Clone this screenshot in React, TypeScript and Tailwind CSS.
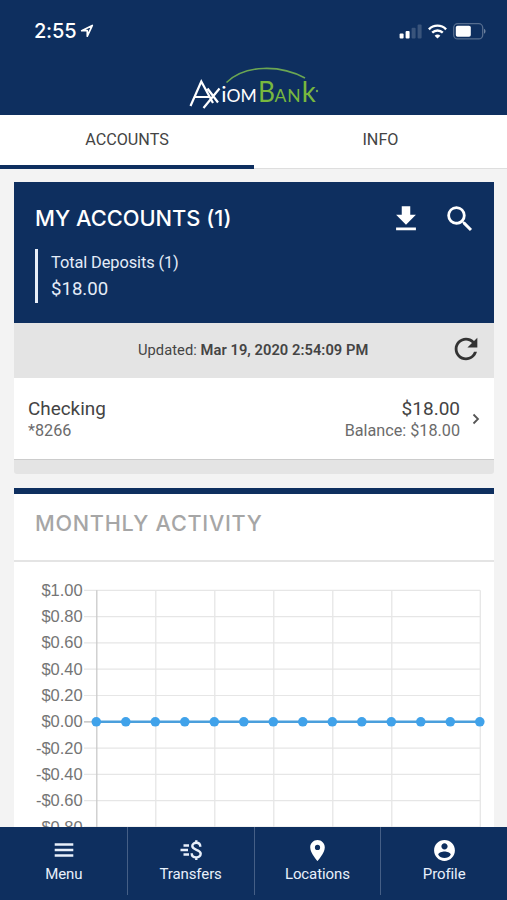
import type { ReactNode } from 'react';
import { MdFileDownload, MdMenu, MdPlace, MdRefresh, MdSearch } from 'react-icons/md';

const GRID_TOP = 28.3;
const GRID_STEP = 26.3;
const ZERO_Y = GRID_TOP + GRID_STEP * 5;
const yLabels = ['$1.00', '$0.80', '$0.60', '$0.40', '$0.20', '$0.00', '-$0.20', '-$0.40', '-$0.60', '-$0.80'];
const pointXs = Array.from({ length: 14 }, (_, i) => 82.3 + i * 29.5);
const gridXs = [0, 2, 4, 6, 8, 10, 13].map((i) => pointXs[i]);

function StatusBar() {
    return (
        <div className="flex h-[62px] items-center justify-between pl-[34px] pr-[21px]">
            <div className="flex items-center gap-[4px]">
                <span className="font-['Inter'] text-[20px] font-medium leading-none tracking-[-0.2px]">2:55</span>
                <svg width="14" height="14" viewBox="0 0 14 14" fill="none" stroke="currentColor" strokeWidth="1.7" strokeLinejoin="round">
                    <path d="M12.3 1.5 7.3 12.2V6.7H1.7Z" />
                </svg>
            </div>
            <div className="flex items-center gap-[6px]">
                <svg width="23" height="15" viewBox="0 0 23 15" fill="currentColor">
                    <rect x="0.6" y="9.5" width="4" height="5" rx="1" />
                    <rect x="6.6" y="7" width="4" height="7.5" rx="1" />
                    <rect x="12.6" y="3.8" width="4" height="10.7" rx="1" opacity="0.18" />
                    <rect x="18.6" y="0.5" width="4" height="14" rx="1" opacity="0.18" />
                </svg>
                <svg width="19" height="15" viewBox="0 0 19 15" fill="none" stroke="currentColor" strokeWidth="2.4">
                    <path d="M0.9 5.3C5.6 0.4 13.4 0.4 18.1 5.3" />
                    <path d="M4.2 8.7C7.2 5.8 11.8 5.8 14.8 8.7" />
                    <path d="M9.5 14.6 6.6 11.7C8.2 10.2 10.8 10.2 12.4 11.7Z" fill="currentColor" stroke="none" />
                </svg>
                <svg width="33" height="17" viewBox="0 0 33 17" fill="none">
                    <rect x="0.7" y="0.7" width="29" height="15.2" rx="4" stroke="#fff" strokeOpacity="0.3" strokeWidth="1.3" />
                    <rect x="2.8" y="2.8" width="15" height="11" rx="1.8" fill="#fff" />
                    <path d="M31 5.8c2 .8 2 4.2 0 5Z" fill="#fff" fillOpacity="0.4" />
                </svg>
            </div>
        </div>
    );
}

function Logo() {
    return (
        <svg className="mx-auto" width="133" height="50" viewBox="0 0 133 50" fontFamily="Lato, sans-serif">
            <path d="M39.500 20.500C58 2.500 93 2.500 118 16" fill="none" stroke="#6ba653" strokeWidth="1.600" />
            <path d="M3.500 44 14.300 19.500 26 41M7.500 35H22M16.500 46 32.500 26.500M20.500 26.500 31 40.500" fill="none" stroke="#fff" strokeWidth="2.200" />
            <text y="40" fill="#fff" fontSize="17.500">
                <tspan x="34.200" fontSize="22">i</tspan>
                <tspan x="39.500">O</tspan>
                <tspan x="53.500">M</tspan>
            </text>
            <text y="40" fill="#78b83e" fontSize="17.500">
                <tspan x="71" fontSize="29.500" textLength="17" lengthAdjust="spacingAndGlyphs">B</tspan>
                <tspan x="87.500">A</tspan>
                <tspan x="100.300">N</tspan>
                <tspan x="114.800" fontSize="29.500" textLength="14" lengthAdjust="spacingAndGlyphs">k</tspan>
            </text>
            <circle cx="130" cy="29" r="1.200" fill="#6ba653" />
        </svg>
    );
}

function ActivityChart() {
    return (
        <svg className="block" width="480" height="300" viewBox="0 0 480 300" fontFamily="Liberation Sans, Arial, sans-serif">
            {yLabels.map((label, i) => (
                <g key={label}>
                    <line x1="70" x2="466" y1={GRID_TOP + i * GRID_STEP} y2={GRID_TOP + i * GRID_STEP} stroke="#e6e6e6" strokeWidth="1.2" />
                    <text x="68.700" y={GRID_TOP + i * GRID_STEP + 5.5} textAnchor="end" fontSize="16.500" fill="#757575">
                        {label}
                    </text>
                </g>
            ))}
            {gridXs.map((x, i) => (
                <line key={x} x1={x + 0.5} x2={x + 0.5} y1={GRID_TOP} y2="300" stroke={i === 0 ? '#c9c9c9' : '#e6e6e6'} strokeWidth="1.3" />
            ))}
            <line x1="70" x2="82" y1={ZERO_Y} y2={ZERO_Y} stroke="#c9c9c9" strokeWidth="1.5" />
            <line x1={pointXs[0]} x2={pointXs[13]} y1={ZERO_Y} y2={ZERO_Y} stroke="#4a9fdc" strokeWidth="2.600" />
            {pointXs.map((x) => (
                <circle key={x} cx={x} cy={ZERO_Y} r="4.800" fill="#40a2ea" />
            ))}
        </svg>
    );
}

function NavItem({ label, children }: { label: string; children: ReactNode }) {
    return (
        <button className="flex h-[68px] flex-1 flex-col items-center border-r border-[#455f86] pt-[11px] last:border-r-0">
            <span className="flex h-6 items-center">{children}</span>
            <span className="mt-px text-[15px] leading-[22px] tracking-[-0.1px]">{label}</span>
        </button>
    );
}

export default function App() {
    return (
        <div className="flex h-[900px] w-[507px] flex-col overflow-hidden bg-[#f3f3f3] font-['Roboto',sans-serif] text-[#444]">
            <header className="h-[115px] shrink-0 bg-[#0e2f5f] text-white">
                <StatusBar />
                <Logo />
            </header>

            <div className="flex h-[54px] shrink-0 border-b border-[#dedede] bg-white text-base">
                <button className="h-[54px] w-[254px] border-b-4 border-[#0e2f5f] text-[16.200px]">ACCOUNTS</button>
                <button className="h-[54px] flex-1 border-b-4 border-transparent text-[16.200px]">INFO</button>
            </div>

            <main className="flex min-h-0 flex-1 flex-col gap-[14px] overflow-hidden pl-[14px] pr-[13px] pt-[13px]">
                <section className="shrink-0">
                    <div className="h-[141px] bg-[#0e2f5f] pl-[21px] pr-[17px] pt-[20px] text-white">
                        <div className="flex h-[34px] items-center justify-between">
                            <h2 className="origin-left scale-x-[1.04] font-['Inter'] text-[21px] font-medium">MY ACCOUNTS (1)</h2>
                            <div className="flex gap-5">
                                <MdFileDownload size={34} />
                                <MdSearch size={34} />
                            </div>
                        </div>
                        <div className="mt-[13px] h-[54px] border-l-[3px] border-[#e8eef8] pl-[13px] pt-px text-[#e4ecf8]">
                            <p className="text-[16.400px] leading-[26px] tracking-[-0.1px]">Total Deposits (1)</p>
                            <p className="text-[18.600px] leading-[26px]">$18.00</p>
                        </div>
                    </div>
                    <div className="flex h-[55px] items-center bg-[#e4e4e4] pb-[3px] pl-[124px] pr-[11px]">
                        <p className="flex-1 pt-[3px] text-[14.700px] tracking-[0.05px]">
                            Updated: <b className="font-semibold">Mar 19, 2020 2:54:09 PM</b>
                        </p>
                        <MdRefresh size={34} className="text-[#333]" />
                    </div>
                    <div className="flex h-[82px] items-center justify-between border-b border-[#ccc] bg-white pl-[14px] pr-[14px]">
                        <div>
                            <p className="text-[18.900px] leading-6">Checking</p>
                            <p className="text-[16.200px] leading-5 text-[#6b6b6b]">*8266</p>
                        </div>
                        <div className="flex items-center gap-[12px] text-right">
                            <div>
                                <p className="text-[19px] leading-6">$18.00</p>
                                <p className="text-[16.200px] leading-5 text-[#6b6b6b]">Balance: $18.00</p>
                            </div>
                            <svg width="8" height="12" viewBox="0 0 8 12" fill="none" stroke="#555" strokeWidth="1.800">
                                <path d="m1.500 1.500 4.500 4.500-4.500 4.500" />
                            </svg>
                        </div>
                    </div>
                    <div className="h-[14px] rounded-b-[3px] bg-[#e4e4e4]" />
                </section>

                <section className="shrink-0 border-t-[6px] border-[#0e2f5f] bg-white">
                    <div className="flex h-[68px] items-center border-b-2 border-[#e4e4e4] pb-[6px] pl-[21px]">
                        <h2 className="origin-left scale-x-[1.03] font-['Inter'] text-[21px] font-medium tracking-[0.7px] text-[#a6a6a6]">MONTHLY ACTIVITY</h2>
                    </div>
                    <ActivityChart />
                </section>
            </main>

            <nav className="flex h-[73px] shrink-0 bg-[#0e2f5f] pl-px text-[#e8f0fb]">
                <NavItem label="Menu">
                    <svg width="24" height="24" viewBox="0 0 24 24" stroke="currentColor" strokeWidth="2.400">
                        <path d="M2.700 6.500h18.600M2.700 12h18.600M2.700 17.500h18.600" />
                    </svg>
                </NavItem>
                <NavItem label="Transfers">
                    <svg width="24" height="24" viewBox="0 0 24 24" fill="none" stroke="currentColor" strokeWidth="2.400">
                        <path d="M4.500 7.500H10M1.500 12H9M4.500 16.500H10" />
                        <path d="M21.300 8.800C21.300 3.400 13.300 3.700 13.300 8.100 13.300 12.600 21.700 11 21.700 15.800 21.700 20.500 12.700 20.700 12.700 15.200M17.300 2.200V5M17.300 19V22" />
                    </svg>
                </NavItem>
                <NavItem label="Locations">
                    <MdPlace size={25} className="text-white" />
                </NavItem>
                <NavItem label="Profile">
                    <svg width="25" height="25" viewBox="0 0 24 24" fill="#fff">
                        <path d="M12 2C6.480 2 2 6.480 2 12s4.480 10 10 10 10-4.480 10-10S17.520 2 12 2zm0 3c1.660 0 3 1.340 3 3s-1.340 3-3 3-3-1.340-3-3 1.340-3 3-3zm0 14.200c-2.500 0-4.710-1.280-6-3.220.03-1.990 4-3.080 6-3.080 1.990 0 5.970 1.090 6 3.080-1.290 1.940-3.500 3.220-6 3.220z" />
                    </svg>
                </NavItem>
            </nav>
        </div>
    );
}
